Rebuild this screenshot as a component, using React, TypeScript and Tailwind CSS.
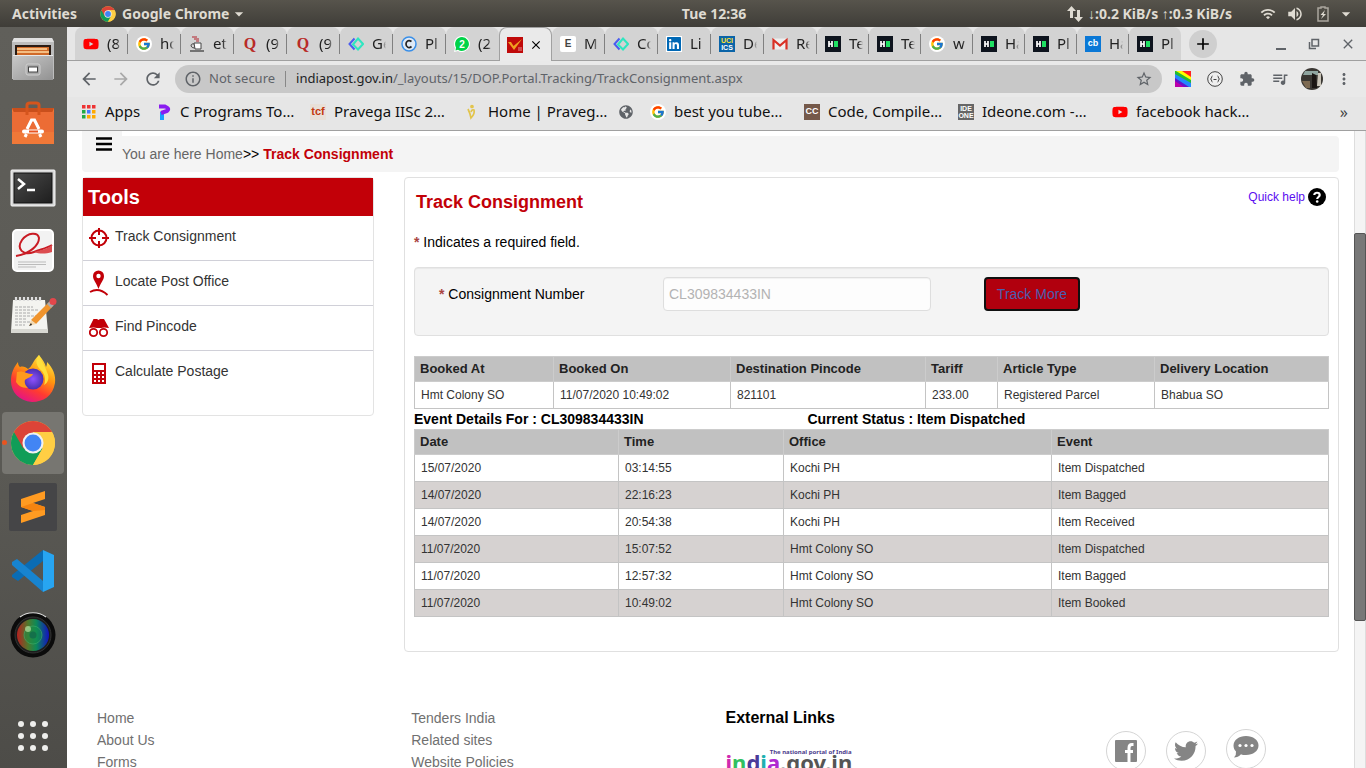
import type { ReactNode } from 'react';
import { FcGoogle } from 'react-icons/fc';
import { FaYoutube, FaLinkedin, FaTwitter, FaGlobeAmericas } from 'react-icons/fa';
import {
  MdArrowBack, MdArrowForward, MdRefresh, MdInfoOutline, MdStarBorder, MdExtension,
  MdQueueMusic, MdMoreVert, MdAdd, MdClose, MdArrowDropDown, MdWifi, MdVolumeUp,
} from 'react-icons/md';

const UI_FONT = 'font-["Noto_Sans",sans-serif]';

/* ---------- favicons ---------- */

function ChromeLogo({ className }: { className: string }) {
  return (
    <svg viewBox="0 0 48 48" className={className} aria-hidden="true">
      <circle cx="24" cy="24" r="23" fill="#ffce44" />
      <path d="M24 24 L4.1 12.5 A23 23 0 0 0 24 47 L34 29.8 Z" fill="#109d58" />
      <path d="M24 24 L14 29.8 L4.1 12.5 A23 23 0 0 1 43.9 12.5 L24 12.5 Z" fill="#dc4437" />
      <path d="M24 13 H44.1 A23 23 0 0 1 24 47 L34 29.8 Z" fill="#ffce44" />
      <circle cx="24" cy="24" r="11" fill="#f1f1f1" />
      <circle cx="24" cy="24" r="8.8" fill="#4285f4" />
    </svg>
  );
}

const YouTube = () => <FaYoutube className="size-4 text-[#f00]" />;

const Google = () => (
  <span className="flex size-4 items-center justify-center rounded-full bg-white">
    <FcGoogle className="size-3.5" />
  </span>
);

const Quora = () => (
  <span className='w-4 text-center font-["Liberation_Serif",serif] text-base leading-4 font-bold text-[#b92b27]'>Q</span>
);

const Java = () => (
  <svg viewBox="0 0 16 16" className="size-4" fill="none">
    <path d="M3 1 H8 M5 3 H10 M7 5 H10" stroke="#b3202a" strokeWidth="1" />
    <path d="M5 7 H12 V13 H6 Z" fill="#fff" stroke="#444" />
    <path d="M5 8 C1 7 1 12 5.500 12" stroke="#444" />
    <path d="M1 15 H15" stroke="#333" strokeWidth="1.200" />
  </svg>
);

const Diamonds = () => (
  <svg viewBox="0 0 16 16" className="size-4" fill="none" strokeWidth="2">
    <path d="M6.500 2.500 L1.500 8 L6.500 13.500" stroke="#4a5df0" />
    <path d="M10 2.500 L15 8 L10 13.500 L5 8.500 Z" stroke="#2ee6c0" />
  </svg>
);

const Copyright = () => (
  <svg viewBox="0 0 16 16" className="size-4" fill="none">
    <circle cx="8" cy="8" r="7" fill="#dfe9f5" stroke="#3a8fe8" strokeWidth="1.500" />
    <path d="M10.500 5.500 C7 3 5 6 5 8 C5 10.500 7.500 13 10.500 10.500" stroke="#222" strokeWidth="1.700" />
  </svg>
);

const WhatsApp = () => (
  <svg viewBox="0 0 16 16" className="size-4">
    <path d="M8 0 A8 8 0 1 1 4 15 L0 16 L1 12 A8 8 0 0 1 8 0" fill="#fff" />
    <path d="M8 1 A7 7 0 1 1 4 13.800 L1.500 14.500 L2 11.500 A7 7 0 0 1 8 1" fill="#00d348" />
    <text x="8" y="11.500" fontSize="10" fontWeight="700" fill="#fff" textAnchor="middle" fontFamily="Liberation Sans">2</text>
  </svg>
);

const Post = () => (
  <svg viewBox="0 0 16 16" className="size-4">
    <rect width="16" height="16" fill="#c00a0a" />
    <path d="M1 5 L4 5 L6.500 9 L15 2 L7 13 Z" fill="#f0a020" />
    <path d="M11 11 H15 M11 13 H15" stroke="#e89090" />
  </svg>
);

function Tile({ className, children }: { className: string; children: ReactNode }) {
  return (
    <span className={`flex size-4 items-center justify-center font-["Liberation_Sans",sans-serif] font-bold ${className}`}>
      {children}
    </span>
  );
}

const LetterE = () => <Tile className="rounded-xs bg-white text-[10px] text-[#444]">E</Tile>;
const LinkedIn = () => <FaLinkedin className="size-4 bg-white text-[#0068b5]" />;
const Uci = () => (
  <Tile className="flex-col bg-[#0a64a8] text-[7px] leading-[7px] text-white">
    <span className="text-[#ffe030]">UCI</span>
    <span>ICS</span>
  </Tile>
);
const Gmail = () => (
  <svg viewBox="0 0 16 16" className="size-4">
    <rect x="1" y="2.500" width="14" height="11" fill="#eee" />
    <path d="M1.500 13.500 V4 L8 9.500 L14.500 4 V13.500" fill="none" stroke="#d93025" strokeWidth="2.200" />
  </svg>
);
const HackerRank = () => (
  <svg viewBox="0 0 16 16" className="size-4">
    <rect width="16" height="16" fill="#0e141e" />
    <path d="M4 5 V11 M7 5 V11 M4 8 H7" stroke="#fff" strokeWidth="1.700" />
    <rect x="9" y="5" width="4" height="6" fill="#1fe063" />
  </svg>
);
const Cb = () => <Tile className="bg-[#0a78d6] text-[9px] text-white">cb</Tile>;

/* ---------- desktop panel ---------- */

function TopBar() {
  return (
    <header className={`grid h-[27px] shrink-0 grid-cols-[11fr_auto_10fr] items-center bg-linear-to-b from-[#57544c] to-[#3f3d38] text-sm font-bold text-[#dfdbd2] ${UI_FONT}`}>
      <div className="flex items-center pl-3">
        <button type="button" className="w-[88px] text-left">Activities</button>
        <button type="button" className="flex items-center">
          <ChromeLogo className="mr-[6px] size-4" />
          Google Chrome
          <MdArrowDropDown className="size-5" />
        </button>
      </div>
      <time>Tue 12:36</time>
      <div className="flex items-center justify-end pr-[10px]">
        <svg viewBox="0 0 18 18" className="mr-1 size-[18px]" fill="#dfdbd2">
          <path d="M5.500 1 L10 6 H7 V13 H4 V6 H1 Z M12.500 17 L8 12 H11 V5 H14 V12 H17 Z" />
        </svg>
        <span className="mr-7">↓:0.2 KiB/s ↑:0.3 KiB/s</span>
        <MdWifi className="mr-[10px] size-4" />
        <MdVolumeUp className="mr-3 size-[18px]" />
        <svg viewBox="0 0 14 16" className="mr-[6px] h-4 w-[14px]" fill="none" stroke="#aaa69e">
          <path d="M5 2 V1 H9 V2 H12 V15 H2 V2 Z" strokeWidth="1.500" />
          <path d="M9 4 L4.500 9 H7 L5 13 L10 8 H7.500 Z" fill="#dfdbd2" stroke="none" />
        </svg>
        <MdArrowDropDown className="size-5" />
      </div>
    </header>
  );
}

const FilesIcon = () => (
  <svg viewBox="0 0 44 46" className="h-[46px] w-11">
    <defs>
      <linearGradient id="steel" x1="0" y1="0" x2="1" y2="1">
        <stop offset="0" stopColor="#c8c8c8" />
        <stop offset="1" stopColor="#929292" />
      </linearGradient>
    </defs>
    <path d="M3 2 H41 L43 6 V43 H1 V6 Z" fill="#bdbdbd" />
    <path d="M3 2 H41 L43 6 H1 Z" fill="#e0e0e0" />
    <rect x="4" y="9" width="36" height="11" fill="#2a1c14" />
    <path d="M6 11 H38 V20 H6 Z" fill="#d06a28" />
    <path d="M6 13 H36 M6 16 H38" stroke="#ffd9a0" strokeWidth="1.500" />
    <path d="M2 20 H42 V44 H2 Z" fill="url(#steel)" />
    <path d="M2 19.500 H42" stroke="#e8e8e8" />
    <rect x="15" y="28" width="14" height="11" rx="2" fill="#a9a9a9" stroke="#d0d0d0" />
    <rect x="17.500" y="31" width="9" height="5" fill="#fff" stroke="#444" />
  </svg>
);

const SoftwareIcon = () => (
  <svg viewBox="0 0 44 46" className="h-[46px] w-11" fill="none">
    <path d="M1 8 H43 V44 H1 Z" fill="#f07838" />
    <path d="M1 8 H43 L41 13 H3 Z" fill="#c94f1c" />
    <path d="M1 12 H43 V32 H1 Z" fill="#ec6c35" />
    <path d="M16 15 V5 Q16 3 19 3 H25 Q28 3 28 5 V15" stroke="#d5551d" strokeWidth="3" />
    <path d="M16 29 L20.500 20 H23.500 L28 29" stroke="#fff" strokeWidth="3" />
    <path d="M13 31.500 H31" stroke="#fff" strokeWidth="4" strokeLinecap="round" />
    <path d="M18 31.500 H27" stroke="#e95420" strokeWidth="2" />
    <path d="M14 37 L15.500 34 M30 37 L28.500 34" stroke="#fff" strokeWidth="3" />
  </svg>
);

const TerminalIcon = () => (
  <svg viewBox="0 0 46 40" className="mt-1 h-10 w-[46px]" fill="none">
    <defs>
      <linearGradient id="term" x1="0" y1="0" x2="1" y2="1">
        <stop offset="0" stopColor="#4a4a4a" />
        <stop offset="1" stopColor="#1e1e1e" />
      </linearGradient>
    </defs>
    <rect x="1" y="1" width="44" height="36" rx="1" fill="#d8d8d8" stroke="#f5f5f5" />
    <rect x="4" y="4" width="38" height="30" fill="url(#term)" stroke="#111" />
    <path d="M8 10 L14 15 L8 20" stroke="#fff" strokeWidth="2.500" />
    <path d="M17 21 H25" stroke="#fff" strokeWidth="2.500" />
  </svg>
);

const EvinceIcon = () => (
  <svg viewBox="0 0 42 44" className="h-11 w-[42px]" fill="none">
    <rect x="1" y="1" width="40" height="41" rx="4" fill="#f2f2f2" stroke="#fff" strokeWidth="2" />
    <path d="M4 27 C18 25 27 16 27 9 C26 3 16 3 10 11 C4 20 11 27 22 23 C30 20 35 19 40 16" stroke="#c91b24" strokeWidth="2" />
    <path d="M22 23 C30 21 37 19 40 16 V23 C33 25 28 25 22 23" fill="#dc4c50" />
    <path d="M6 33 H34 M6 35.500 H34 M6 38 H24" stroke="#bbb" />
  </svg>
);

const NotesIcon = () => (
  <svg viewBox="0 0 48 40" className="h-10 w-12" fill="none">
    <path d="M4 5 H36 L39 37 H2 Z" fill="#f4f4f0" />
    <path d="M2 34 H39 V38 H2 Z" fill="#d8d8d2" />
    <path d="M7 6 V2 M11 6 V2 M15 6 V2 M19 6 V2 M23 6 V2 M27 6 V2 M31 6 V2" stroke="#ddd" strokeWidth="2.200" />
    <path d="M6 12 H24 M6 15 H30 M6 18 H22 M6 21 H28 M6 24 H18 M6 27 H24 M6 30 H16" stroke="#aaa" strokeDasharray="3 1" />
    <path d="M22 25 L40 7 L44 11 L27 29 Z" fill="#f0942c" />
    <path d="M22 25 L27 29 L20 31 Z" fill="#f3d9b0" />
    <path d="M38 9 L41 6 L45 10 L42 13 Z" fill="#aaa" />
    <circle cx="44" cy="6.500" r="3.500" fill="#e2474b" />
    <path d="M20 31 L22 28 L23 30 Z" fill="#222" />
  </svg>
);

const FirefoxIcon = () => (
  <svg viewBox="0 0 46 48" className="h-12 w-[46px]">
    <defs>
      <linearGradient id="fox" x1="0.800" y1="0" x2="0.300" y2="1">
        <stop offset="0" stopColor="#fff14a" />
        <stop offset="0.400" stopColor="#ff980e" />
        <stop offset="0.700" stopColor="#ff3b30" />
        <stop offset="1" stopColor="#e3128a" />
      </linearGradient>
      <radialGradient id="globe">
        <stop offset="0" stopColor="#8f52ff" />
        <stop offset="1" stopColor="#4a2fb0" />
      </radialGradient>
    </defs>
    <path d="M29 0 C33 5 35 8 36 12 C37 10 37 8 37 7 C43 13 46 20 45 28 C43 41 33 47 22 47 C9 46 1 37 1 26 C1 18 4 12 8 7 C8 10 9 11 10 12 C13 11 16 12 18 14 C22 12 22 7 29 0 Z" fill="url(#fox)" />
    <circle cx="23" cy="24" r="10.500" fill="url(#globe)" />
    <path d="M7 17 C13 15 16 19 23 19 C22 22 17 23 15 25 C14 28 16 31 18 33 C11 33 8 30 6 27 Z" fill="#ff9a1c" />
    <path d="M29 0 C24 6 27 12 32 16 C35 20 36 25 34 30 C38 28 40 23 37 17 C35 10 31 7 29 0" fill="#ffdf3c" />
  </svg>
);

const SublimeIcon = () => (
  <svg viewBox="0 0 48 48" className="size-12">
    <rect width="48" height="48" rx="2" fill="#454547" />
    <path d="M12 16 L36 8 V16 L24 20 L36 24 V32 L12 40 V32 L24 28 L12 24 Z" fill="#ff9b22" />
    <path d="M24 20 L36 24 V27 L24 28 L12 24 Z" fill="#f58410" />
  </svg>
);

const VsCodeIcon = () => (
  <svg viewBox="0 0 42 42" className="size-[42px]">
    <path d="M31 0 L31 11 L6 31 L0 27 V25 Z" fill="#0a6cb4" />
    <path d="M0 15 V12 L5 9 L31 31 V42 Z" fill="#1784d0" />
    <path d="M31 0 L42 5 V37 L31 42 Z" fill="#27a5f2" />
  </svg>
);

const LensIcon = () => (
  <svg viewBox="0 0 46 46" className="size-[46px]">
    <defs>
      <linearGradient id="lens">
        <stop offset="0" stopColor="#b52020" />
        <stop offset="0.350" stopColor="#4e7a2c" />
        <stop offset="0.600" stopColor="#0c8a58" />
        <stop offset="1" stopColor="#1410c0" />
      </linearGradient>
    </defs>
    <circle cx="23" cy="23" r="22.500" fill="#0b0b0b" />
    <path d="M10 5 A22 22 0 0 1 36 5" fill="none" stroke="#ddd" strokeWidth="1.200" />
    <circle cx="23" cy="23" r="18" fill="#1c1c1c" stroke="#333" />
    <circle cx="23" cy="23" r="16" fill="url(#lens)" />
    <circle cx="23" cy="23" r="9" fill="#14924a" fillOpacity="0.500" stroke="#3fae6a" strokeOpacity="0.600" />
    <circle cx="23" cy="23" r="3.500" fill="#14704a" />
    <circle cx="18" cy="17" r="3" fill="#b8e0a0" fillOpacity="0.700" />
  </svg>
);

const GridIcon = () => (
  <svg viewBox="0 0 30 30" className="size-[30px]" fill="#eeeeec">
    {[3, 15, 27].map((y) => [3, 15, 27].map((x) => <circle key={`${x}-${y}`} cx={x} cy={y} r="3" />))}
  </svg>
);

const dockApps: { name: string; icon: ReactNode; active?: boolean }[] = [
  { name: 'Files', icon: <FilesIcon /> },
  { name: 'Ubuntu Software', icon: <SoftwareIcon /> },
  { name: 'Terminal', icon: <TerminalIcon /> },
  { name: 'Document Viewer', icon: <EvinceIcon /> },
  { name: 'Text Editor', icon: <NotesIcon /> },
  { name: 'Firefox', icon: <FirefoxIcon /> },
  { name: 'Chrome', icon: <ChromeLogo className="size-[46px]" />, active: true },
  { name: 'Sublime Text', icon: <SublimeIcon /> },
  { name: 'Visual Studio Code', icon: <VsCodeIcon /> },
  { name: 'Camera', icon: <LensIcon /> },
];

function Dock() {
  return (
    <nav aria-label="Dock" className="flex w-[67px] shrink-0 flex-col gap-0.5 bg-linear-to-b from-[#605f5a] via-[#5a5954] via-60% to-[#4d4c48] py-px pl-0.5">
      {dockApps.map((app) => (
        <button
          key={app.name}
          type="button"
          aria-label={app.name}
          className={`relative flex size-[62px] shrink-0 items-center justify-center rounded-sm ${app.active ? 'bg-[#777671]' : ''}`}
        >
          {app.active && <span className="absolute top-7 left-0 size-[5px] rounded-full bg-[#e95420]" />}
          {app.icon}
        </button>
      ))}
      <button type="button" aria-label="Show Applications" className="mt-auto flex size-[62px] shrink-0 items-center justify-center">
        <GridIcon />
      </button>
    </nav>
  );
}

/* ---------- browser chrome ---------- */

const tabs: { icon: ReactNode; text: string; active?: boolean }[] = [
  { icon: <YouTube />, text: '(8' },
  { icon: <Google />, text: 'ho' },
  { icon: <Java />, text: 'et' },
  { icon: <Quora />, text: '(9' },
  { icon: <Quora />, text: '(9' },
  { icon: <Diamonds />, text: 'Ge' },
  { icon: <Copyright />, text: 'Pl' },
  { icon: <WhatsApp />, text: '(2' },
  { icon: <Post />, text: '', active: true },
  { icon: <LetterE />, text: 'M' },
  { icon: <Diamonds />, text: 'Co' },
  { icon: <LinkedIn />, text: 'Li' },
  { icon: <Uci />, text: 'De' },
  { icon: <Gmail />, text: 'Re' },
  { icon: <HackerRank />, text: 'Te' },
  { icon: <HackerRank />, text: 'Te' },
  { icon: <Google />, text: 'w' },
  { icon: <HackerRank />, text: 'Ha' },
  { icon: <HackerRank />, text: 'Pl' },
  { icon: <Cb />, text: 'Ha' },
  { icon: <HackerRank />, text: 'Pl' },
];

function TabStrip() {
  return (
    <div className="flex h-[34px] shrink-0 border-b border-[#a0a0a0] bg-[#e6e6e6] pl-2">
      {tabs.map((tab, i) => (
        <div
          key={i}
          className={`flex shrink-0 items-center rounded-t-lg pl-2 text-[15px] ${i < 14 ? 'w-[53px]' : 'w-[52px]'} ${
            tab.active ? '-mb-px border border-b-0 border-[#a0a0a0] bg-[#eaeaea] pl-[7px]' : 'bg-[#d3d3d3]'
          }`}
        >
          <span className="flex size-4 shrink-0">{tab.icon}</span>
          {tab.active ? (
            <button type="button" aria-label="Close tab" className="ml-1.5">
              <MdClose className="size-[14px] text-black" />
            </button>
          ) : (
            <>
              <span className="ml-2 w-[14px] overflow-hidden mask-r-from-70% text-[#222]">{tab.text}</span>
              {!tabs[i + 1]?.active && i < tabs.length - 1 && <span className="ml-auto h-5 w-px bg-[#808080]" />}
            </>
          )}
        </div>
      ))}
      <button type="button" aria-label="New tab" className="mt-[3px] ml-2 flex size-7 items-center justify-center rounded-full bg-[#cfcfcf]">
        <MdAdd className="size-5 text-black" />
      </button>
      <div className="mr-[10px] ml-auto flex items-center gap-5 text-[#5f6368]">
        <button type="button" aria-label="Minimize" className="flex size-3 items-end"><span className="h-0.5 w-[10px] bg-[#5f6368]" /></button>
        <button type="button" aria-label="Restore">
          <svg viewBox="0 0 12 12" className="size-3" fill="none" stroke="#5f6368" strokeWidth="1.500">
            <path d="M4 1.500 H10.500 V8 H4 Z M1.500 4 V10.500 H8" />
          </svg>
        </button>
        <button type="button" aria-label="Close"><MdClose className="size-4" /></button>
      </div>
    </div>
  );
}

function Toolbar() {
  return (
    <div className="flex h-9 shrink-0 items-center bg-[#e9e9e9] text-[#5f6368]">
      <button type="button" aria-label="Back" className="ml-3"><MdArrowBack className="size-5" /></button>
      <button type="button" aria-label="Forward" className="ml-3"><MdArrowForward className="size-5 text-[#a8a8a8]" /></button>
      <button type="button" aria-label="Reload" className="ml-3"><MdRefresh className="size-5" /></button>
      <div className="ml-3 flex h-7 min-w-0 flex-1 items-center rounded-full bg-[#c8c8c8] pr-[9px] pl-[9px] text-[13px]">
        <MdInfoOutline className="size-[18px] shrink-0" />
        <span className="ml-[7px] shrink-0">Not secure</span>
        <span className="mx-[10px] h-4 w-px shrink-0 bg-[#888]" />
        <span className="min-w-0 flex-1 truncate">
          <span className="text-[#202124]">indiapost.gov.in</span>/_layouts/15/DOP.Portal.Tracking/TrackConsignment.aspx
        </span>
        <MdStarBorder className="size-[18px] shrink-0" />
      </div>
      <div className="mx-[13px] flex items-center gap-4">
        <svg viewBox="0 0 16 16" className="size-4">
          <rect width="16" height="16" fill="#f22" />
          <path d="M0 0 H7 L16 6 V16 H0 Z" fill="#ff0" />
          <path d="M0 0 H1 L16 9 V16 H0 Z" fill="#2b3" />
          <path d="M0 3 L16 12 V16 H0 Z" fill="#28f" />
          <path d="M0 7 L14 16 H0 Z" fill="#61c" />
          <path d="M0 10 L9 16 H0 Z" fill="#b0a" />
        </svg>
        <svg viewBox="0 0 16 16" className="size-4" fill="none" stroke="#444">
          <circle cx="8" cy="8" r="7.300" fill="#eee" />
          <path d="M5.500 5 Q4.500 5 4.500 7 L3.500 8 L4.500 9 Q4.500 11 5.500 11 M10.500 5 Q11.500 5 11.500 7 L12.500 8 L11.500 9 Q11.500 11 10.500 11 M6.500 8.500 H9.500" />
        </svg>
        <MdExtension className="size-4" />
        <MdQueueMusic className="size-[18px]" />
        <svg viewBox="0 0 22 22" className="-mx-1 size-[22px]">
          <circle cx="11" cy="11" r="11" fill="#3a3733" />
          <path d="M4 3 H17 V7 H2 Z" fill="#8fa5a0" />
          <path d="M1 13 H9 V20 H5 Z" fill="#7d6a52" />
          <path d="M17 5 H20 V18 H16 Z" fill="#c9c4b8" />
          <path d="M11 5 L15 7 L16 20 H11 Z" fill="#1a1513" />
        </svg>
        <MdMoreVert className="size-[18px]" />
      </div>
    </div>
  );
}

const AppsIcon = () => (
  <svg viewBox="0 0 16 16" className="size-4">
    {['#e33', '#e33', '#e33', '#2a4', '#47f', '#fa0', '#2a4', '#fa0', '#fa0'].map((c, i) => (
      <rect key={i} x={1 + (i % 3) * 5} y={1 + Math.floor(i / 3) * 5} width="3.500" height="3.500" fill={c} />
    ))}
  </svg>
);
const PIcon = () => (
  <svg viewBox="0 0 16 16" className="size-4" fill="none" strokeWidth="4">
    <path d="M6 16 V8" stroke="#18a0ff" />
    <path d="M3 2.500 L9 2.500 Q14 4.500 11 7 L5 9" stroke="#8a1cf0" />
  </svg>
);
const VIcon = () => (
  <svg viewBox="0 0 16 16" className="size-4" fill="none" stroke="#e2c44a" strokeWidth="1.700">
    <path d="M4 5 Q6 9 7 14 Q11 10 10 6 Q8 5 7 8" />
    <circle cx="8" cy="2.500" r="1" />
  </svg>
);

const bookmarks: { icon: ReactNode; text: string; width: string }[] = [
  { icon: <AppsIcon />, text: 'Apps', width: 'w-[75px]' },
  { icon: <PIcon />, text: 'C Programs To…', width: 'w-[154px]' },
  { icon: <Tile className="bg-[#e8e0d8] text-[11px] text-[#c33a10]">tcf</Tile>, text: 'Pravega IISc 2…', width: 'w-[154px]' },
  { icon: <VIcon />, text: 'Home | Praveg…', width: 'w-[154px]' },
  { icon: <FaGlobeAmericas className="size-[14px] text-[#5f6368]" />, text: '', width: 'w-8' },
  { icon: <Google />, text: 'best you tube…', width: 'w-[154px]' },
  { icon: <Tile className="bg-[#75594a] text-[9px] text-white">CC</Tile>, text: 'Code, Compile…', width: 'w-[154px]' },
  { icon: <Tile className="flex-col bg-[#666] text-[7px] leading-[7px] text-white"><span>IDE</span><span>ONE</span></Tile>, text: 'Ideone.com -…', width: 'w-[154px]' },
  { icon: <YouTube />, text: 'facebook hack…', width: 'w-[154px]' },
];

function BookmarksBar() {
  return (
    <div className="flex h-[34px] shrink-0 items-center overflow-hidden border-b border-[#a0a0a0] bg-[#e6e6e6] pb-1 pl-[14px] text-[15px] text-[#111]">
      {bookmarks.map((b, i) => (
        <button key={i} type="button" aria-label={b.text || 'Bookmark'} className={`flex shrink-0 items-center gap-2 text-left whitespace-nowrap ${b.width}`}>
          <span className="flex size-4 shrink-0 items-center justify-center">{b.icon}</span>
          {b.text}
        </button>
      ))}
      <button type="button" aria-label="More bookmarks" className="mr-[18px] ml-auto text-base text-[#444]">»</button>
    </div>
  );
}

/* ---------- web page ---------- */

const red = '#c20008';

const TargetIcon = () => (
  <svg viewBox="0 0 20 20" className="size-5" fill="none" stroke={red} strokeWidth="2">
    <circle cx="10" cy="10" r="7.500" />
    <path d="M10 0 V7 M10 13 V20 M0 10 H7 M13 10 H20" />
  </svg>
);
const PinIcon = () => (
  <svg viewBox="0 0 20 26" className="h-[26px] w-5" fill="none">
    <path d="M9.500 19 C7.500 13 4 10 4 6 A5.500 5.500 0 0 1 15 6 C15 10 11.500 13 9.500 19 Z" fill={red} />
    <circle cx="9.500" cy="6" r="2.200" fill="#fff" />
    <path d="M1 22 Q10 17 18.500 25" stroke={red} strokeWidth="2" />
  </svg>
);
const SpyIcon = () => (
  <svg viewBox="0 0 20 20" className="size-5" fill="none">
    <path d="M4.500 1 H8 L9.500 2 L11 1 H15 L20 10 Q15 9 12 10 H8 Q5 9 0 10 Z" fill={red} />
    <circle cx="4.500" cy="14.500" r="3.700" stroke={red} strokeWidth="1.800" />
    <circle cx="14.500" cy="14.500" r="3.700" stroke={red} strokeWidth="1.800" />
  </svg>
);
const CalcIcon = () => (
  <svg viewBox="0 0 20 22" className="h-[22px] w-5">
    <rect x="3" y="0" width="14" height="21" fill={red} />
    <rect x="5" y="2" width="10" height="5" fill="#fff" />
    {[9, 13, 17].map((y) => [5, 9, 13].map((x) => <rect key={`${x}-${y}`} x={x} y={y} width="2" height="2" fill="#fff" />))}
  </svg>
);

const tools = [
  { icon: <TargetIcon />, text: 'Track Consignment' },
  { icon: <PinIcon />, text: 'Locate Post Office' },
  { icon: <SpyIcon />, text: 'Find Pincode' },
  { icon: <CalcIcon />, text: 'Calculate Postage' },
];

function ToolsCard() {
  return (
    <aside className="h-[239px] w-[292px] shrink-0 rounded-sm border border-[#e3e3e3]">
      <h2 className="h-[38px] bg-[#c20008] pl-[5px] text-xl leading-[38px] font-bold text-white">Tools</h2>
      <ul>
        {tools.map((t) => (
          <li key={t.text} className="h-[45px] border-b border-[#d0d0d8] last:border-b-0">
            <a href="#tool" className="flex h-full gap-[6px] pl-[6px] text-[#333]">
              <span className="flex w-5 items-center">{t.icon}</span>
              <span className="leading-10">{t.text}</span>
            </a>
          </li>
        ))}
      </ul>
    </aside>
  );
}

function DataTable({ heads, widths, rows }: { heads: string[]; widths: string[]; rows: string[][] }) {
  return (
    <table className="w-full table-fixed border-collapse text-left text-xs text-[#333]">
      <colgroup>
        {widths.map((w, i) => <col key={i} className={w} />)}
      </colgroup>
      <thead className="bg-[#c1c1c1] text-[13px] text-[#222]">
        <tr className="h-[25px]">
          {heads.map((h) => <th key={h} scope="col" className="border border-[#ccc] px-[5px] font-bold">{h}</th>)}
        </tr>
      </thead>
      <tbody>
        {rows.map((row, i) => (
          <tr key={i} className="h-[27px] even:bg-[#d6d2d1]">
            {row.map((cell, j) => <td key={j} className="border border-[#c4c4c4] px-[6px]">{cell}</td>)}
          </tr>
        ))}
      </tbody>
    </table>
  );
}

const bookingRows = [['Hmt Colony SO', '11/07/2020 10:49:02', '821101', '233.00', 'Registered Parcel', 'Bhabua SO']];
const eventRows = [
  ['15/07/2020', '03:14:55', 'Kochi PH', 'Item Dispatched'],
  ['14/07/2020', '22:16:23', 'Kochi PH', 'Item Bagged'],
  ['14/07/2020', '20:54:38', 'Kochi PH', 'Item Received'],
  ['11/07/2020', '15:07:52', 'Hmt Colony SO', 'Item Dispatched'],
  ['11/07/2020', '12:57:32', 'Hmt Colony SO', 'Item Bagged'],
  ['11/07/2020', '10:49:02', 'Hmt Colony SO', 'Item Booked'],
];

function TrackingCard() {
  return (
    <section className="min-w-0 flex-1 rounded-sm border border-[#e0e0e0] px-[9px] pt-2 pb-[34px]">
      <div className="flex items-start justify-between">
        <h1 className="pl-0.5 text-lg leading-8 font-bold text-[#c20008]">Track Consignment</h1>
        <a href="#help" className="mr-[3px] flex items-center gap-[3px] pt-0.5 text-xs text-[#5a0df0]">
          Quick help
          <svg viewBox="0 0 18 18" className="size-[18px]">
            <circle cx="9" cy="9" r="9" fill="#000" />
            <path d="M6.300 7 C6.300 4 11.700 4 11.700 7 C11.700 9 9.200 9 9.200 11" fill="none" stroke="#fff" strokeWidth="2.200" />
            <circle cx="9.200" cy="13.500" r="1.300" fill="#fff" />
          </svg>
        </a>
      </div>
      <p className="pt-[14px] leading-5 text-black"><b className="text-[#a94442]">*</b> Indicates a required field.</p>
      <form className="mt-[15px] mb-5 flex h-[69px] items-start rounded-sm border border-[#e0e0e0] bg-[#f4f4f4] pt-[9px] pl-6 shadow-[inset_0_1px_1px_rgba(0,0,0,0.05)]">
        <label htmlFor="consignment" className="w-[224px] leading-[34px] text-black"><b className="text-[#a94442]">*</b> Consignment Number</label>
        <input
          id="consignment"
          type="text"
          placeholder="CL309834433IN"
          className="h-[34px] w-[268px] rounded-sm border border-[#dedede] bg-[#fdfdfd] px-[5px] shadow-[inset_0_1px_1px_rgba(0,0,0,0.05)] placeholder:text-[#b3b3b3]"
        />
        <button type="button" className="ml-[53px] h-[34px] w-24 rounded-sm border-2 border-[#101010] bg-[#b1000e] text-[#4a5fb0]">Track More</button>
      </form>
      <DataTable
        heads={['Booked At', 'Booked On', 'Destination Pincode', 'Tariff', 'Article Type', 'Delivery Location']}
        widths={['w-[139px]', 'w-[177px]', 'w-[195px]', 'w-[72px]', 'w-[157px]', 'w-auto']}
        rows={bookingRows}
      />
      <div className="flex leading-5 font-bold text-black">
        <p className="w-[43%]">Event Details For : CL309834433IN</p>
        <p>Current Status : Item Dispatched</p>
      </div>
      <DataTable
        heads={['Date', 'Time', 'Office', 'Event']}
        widths={['w-[204px]', 'w-[165px]', 'w-[268px]', 'w-auto']}
        rows={eventRows}
      />
    </section>
  );
}

function PageFooter() {
  return (
    <footer className="mt-[55px] flex leading-[22px] text-[#707070]">
      <ul className="w-1/4 pl-[15px]">
        {['Home', 'About Us', 'Forms'].map((t) => <li key={t}><a href="#footer">{t}</a></li>)}
      </ul>
      <ul className="w-1/4 pl-[15px]">
        {['Tenders India', 'Related sites', 'Website Policies'].map((t) => <li key={t}><a href="#footer">{t}</a></li>)}
      </ul>
      <div className="w-1/4 pl-[15px]">
        <h3 className="text-base leading-[22px] font-bold text-black">External Links</h3>
        <a href="#india" className='mt-5 flex w-[126px] flex-col font-["Noto_Sans",sans-serif] font-bold'>
          <span className="self-end text-[6px] leading-[6px] text-[#4b3c8c]">The national portal of India</span>
          <span className="-mt-[5px] text-[22px] leading-6 whitespace-nowrap text-[#555]">
            <span className="text-[#d02ab0]">i</span><span className="text-[#30c060]">n</span><span className="text-[#4a3a9a]">d</span><span className="text-[#20b0b0]">i</span><span className="text-[#b02ad0]">a</span>.gov.in
          </span>
        </a>
      </div>
      <div className="flex flex-1 justify-end gap-5 pr-[73px] text-[#858585]">
        <a href="#facebook" aria-label="Facebook" className="mt-6 flex size-10 items-center justify-center rounded-full border border-[#d5d5d5]">
          <svg viewBox="0 0 22 22" className="size-[22px]">
            <rect width="22" height="22" rx="1" fill="#858585" />
            <path d="M18.500 4.500 H17 Q14 4.500 14 8 V22 M10 11.500 H18" fill="none" stroke="#fff" strokeWidth="3" />
          </svg>
        </a>
        <a href="#twitter" aria-label="Twitter" className="mt-6 flex size-10 items-center justify-center rounded-full border border-[#d5d5d5]"><FaTwitter className="size-6" /></a>
        <a href="#feedback" aria-label="Feedback" className="mt-[22px] flex size-10 items-center justify-center rounded-full border border-[#d5d5d5]">
          <svg viewBox="0 0 26 24" className="mb-1 h-6 w-[26px]">
            <path d="M13 1 C20 1 25.500 5 25.500 10.500 C25.500 16 20 20 13 20 C11 20 9.500 20 8 19.200 Q5 22.500 1 22.500 Q3.500 20 3 16.500 C1.500 15 0.500 13 0.500 10.500 C0.500 5 6 1 13 1" fill="#858585" />
            <circle cx="7" cy="10.500" r="1.600" fill="#fff" />
            <circle cx="13" cy="10.500" r="1.600" fill="#fff" />
            <circle cx="19" cy="10.500" r="1.600" fill="#fff" />
          </svg>
        </a>
      </div>
    </footer>
  );
}

function WebPage() {
  return (
    <div className='flex min-h-0 flex-1 bg-white font-["Liberation_Sans",sans-serif] text-sm'>
      <div className="min-w-0 flex-1 overflow-hidden px-[15px]">
        <div className="flex">
          <button type="button" aria-label="Menu" className="flex h-[41px] w-10 justify-center rounded-bl-sm bg-[#f4f4f4] pt-[6px]">
            <svg viewBox="0 0 16 14" className="ml-1 h-[14px] w-4" stroke="#000" strokeWidth="2.500">
              <path d="M0 1.500 H16 M0 7 H16 M0 12.500 H16" />
            </svg>
          </button>
          <p className="mt-[5px] h-9 flex-1 rounded-r-sm bg-[#f4f4f4] leading-9 text-[#666]">
            You are here <a href="#home">Home</a><span className="text-black">&gt;&gt;</span> <b className="text-[#c20008]">Track Consignment</b>
          </p>
        </div>
        <main className="mt-[5px] flex items-start gap-[30px]">
          <ToolsCard />
          <TrackingCard />
        </main>
        <PageFooter />
      </div>
      <div className="flex w-3 shrink-0 flex-col border-x border-[#ddd] bg-[#f4f4f4]">
        <div className="h-[16%]" />
        <div className="-mx-px h-[61%] rounded-xs border border-[#555] bg-[#787878]" />
      </div>
    </div>
  );
}

export default function App() {
  return (
    <div className="flex h-screen flex-col overflow-hidden">
      <TopBar />
      <div className="flex min-h-0 flex-1">
        <Dock />
        <div className={`flex min-w-0 flex-1 flex-col ${UI_FONT}`}>
          <TabStrip />
          <Toolbar />
          <BookmarksBar />
          <WebPage />
        </div>
      </div>
    </div>
  );
}
